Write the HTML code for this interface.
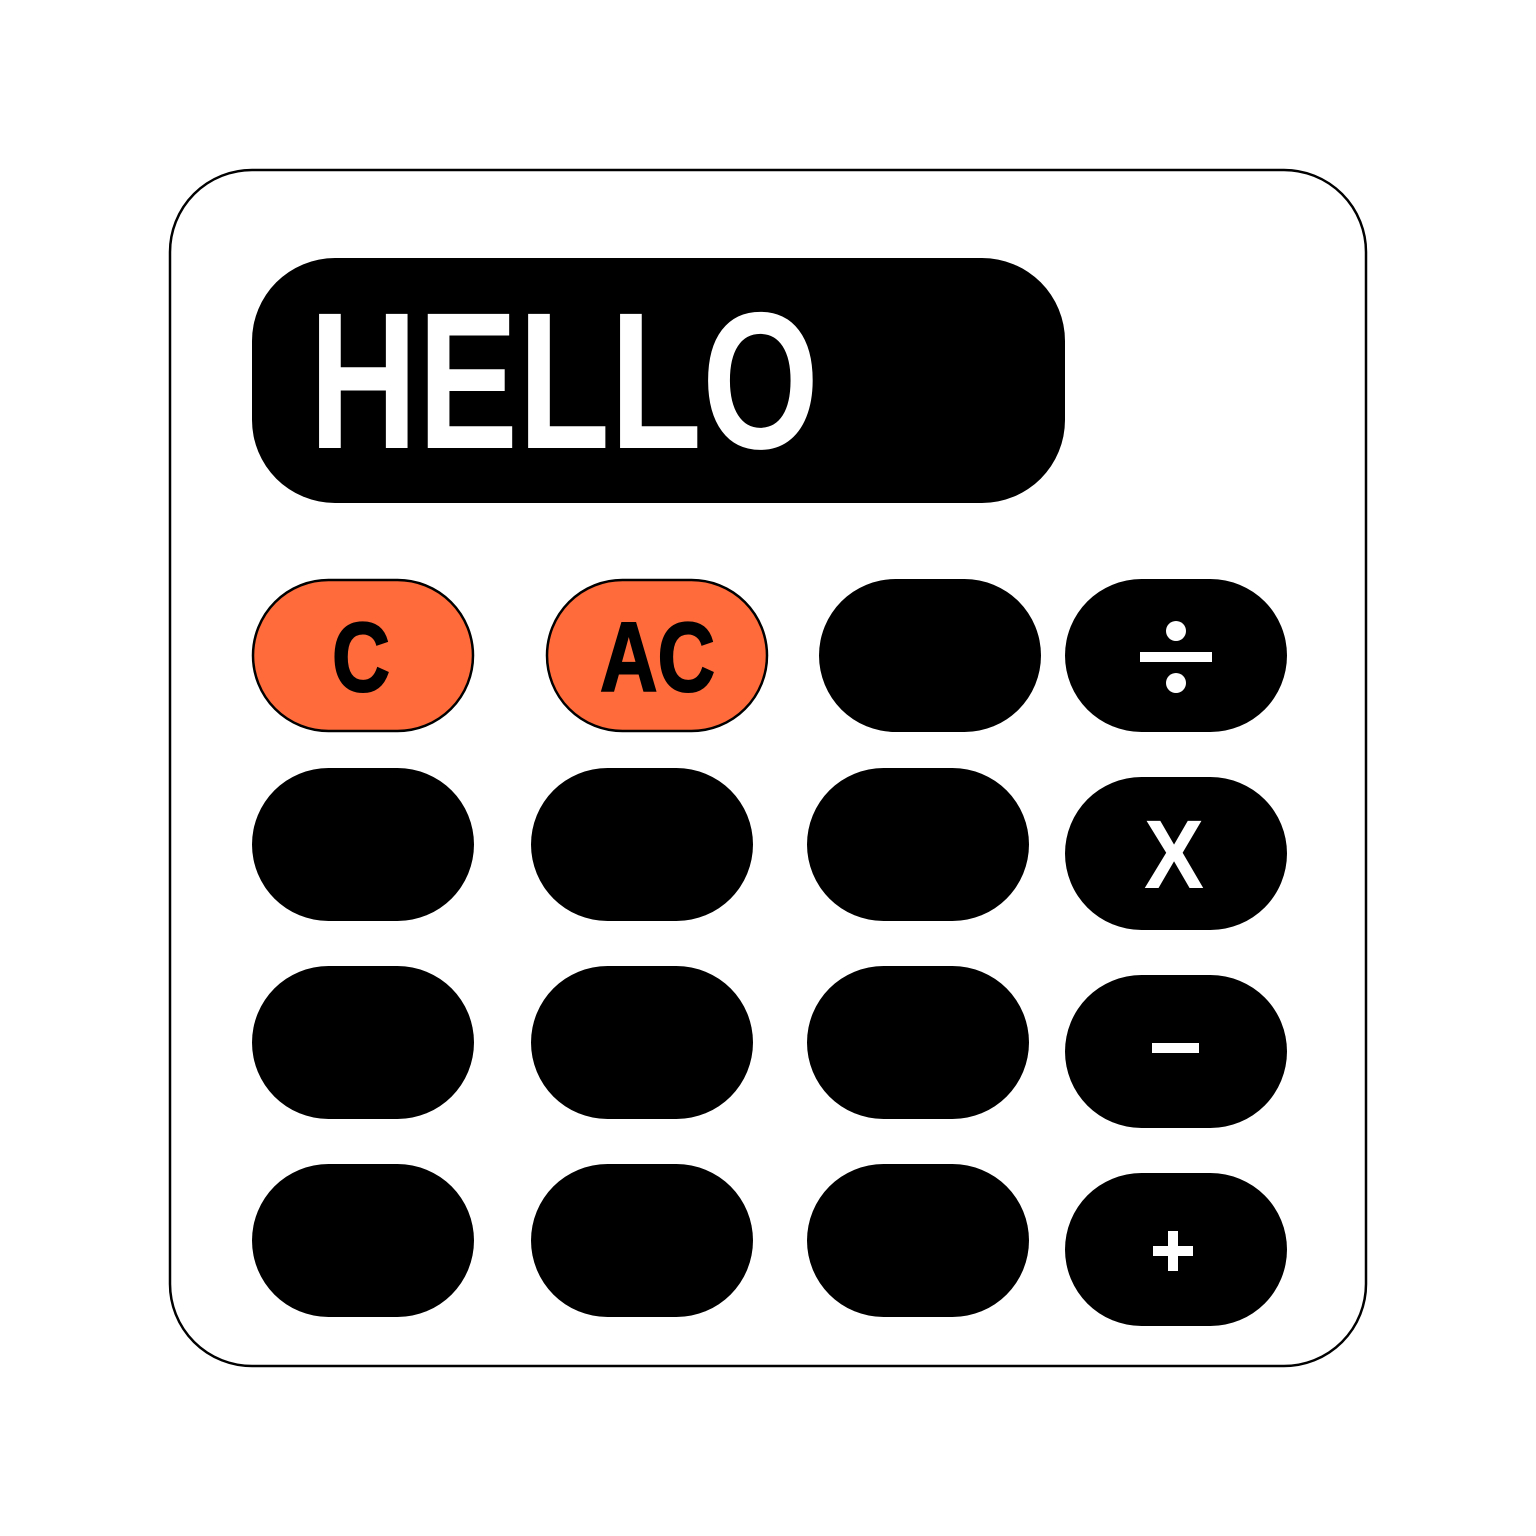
<!DOCTYPE html>
<html><head><meta charset="utf-8"><style>html,body{margin:0;padding:0;background:#fff}svg{display:block}</style></head>
<body>
<svg width="1536" height="1536" viewBox="0 0 1536 1536" xmlns="http://www.w3.org/2000/svg">
<rect x="170" y="170" width="1196" height="1196" rx="82" fill="#fff" stroke="#000" stroke-width="2.5"/>
<rect x="252" y="258" width="813" height="245" rx="83" fill="#000"/>
<text x="309" y="448" font-family="Liberation Sans, sans-serif" font-weight="bold" font-size="195" fill="#fff" textLength="510" lengthAdjust="spacingAndGlyphs">HELLO</text>
<g fill="#FF6B3A" stroke="#000" stroke-width="2.5">
<rect x="253" y="580" width="220" height="151" rx="75.5"/>
<rect x="547" y="580" width="220" height="151" rx="75.5"/>
</g>
<g font-family="Liberation Sans, sans-serif" font-weight="bold" font-size="98" fill="#000" stroke="#000" stroke-width="2">
<text x="332" y="691" textLength="58" lengthAdjust="spacingAndGlyphs">C</text>
<text x="600" y="691" textLength="115" lengthAdjust="spacingAndGlyphs">AC</text>
</g>
<g fill="#000">
<rect x="819" y="579" width="222" height="153" rx="76.5"/>
<rect x="1065" y="579" width="222" height="153" rx="76.5"/>
<rect x="252" y="768" width="222" height="153" rx="76.5"/>
<rect x="531" y="768" width="222" height="153" rx="76.5"/>
<rect x="807" y="768" width="222" height="153" rx="76.5"/>
<rect x="1065" y="777" width="222" height="153" rx="76.5"/>
<rect x="252" y="966" width="222" height="153" rx="76.5"/>
<rect x="531" y="966" width="222" height="153" rx="76.5"/>
<rect x="807" y="966" width="222" height="153" rx="76.5"/>
<rect x="1065" y="975" width="222" height="153" rx="76.5"/>
<rect x="252" y="1164" width="222" height="153" rx="76.5"/>
<rect x="531" y="1164" width="222" height="153" rx="76.5"/>
<rect x="807" y="1164" width="222" height="153" rx="76.5"/>
<rect x="1065" y="1173" width="222" height="153" rx="76.5"/>
</g>
<g fill="#fff">
<circle cx="1176" cy="631" r="10"/>
<circle cx="1176" cy="683" r="10"/>
<rect x="1140" y="652" width="72" height="10"/>
<text x="1144" y="888" font-family="Liberation Sans, sans-serif" font-weight="bold" font-size="97" textLength="60" lengthAdjust="spacingAndGlyphs">X</text>
<rect x="1152" y="1043" width="47" height="10"/>
<rect x="1153" y="1246" width="40" height="10"/>
<rect x="1168" y="1231" width="10" height="40"/>
</g>
</svg>
</body></html>
